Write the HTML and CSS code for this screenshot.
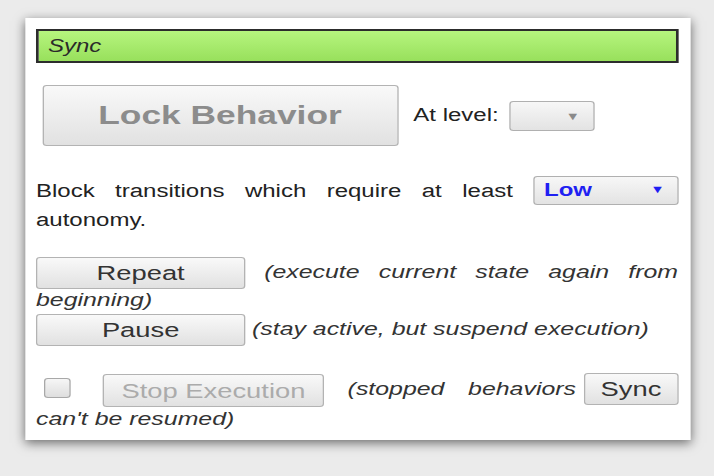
FILE: index.html
```html
<!DOCTYPE html>
<html lang="en">
<head>
<meta charset="UTF-8">
<meta name="viewport" content="width=device-width, initial-scale=1.0">
<title>Behavior Control</title>
<link rel="stylesheet" href="styles.css">
</head>
<body>
    <div class="page">
        <div class="panel">
            <div class="state-bar">Sync</div>

            <div class="lock-row">
                <button class="btn btn-lock" disabled>Lock Behavior</button>
                <span class="level-label">At level:</span>
                <span class="dropdown dropdown-level"><span class="arrow">&#9660;</span></span>
            </div>

            <p class="block-text">Block transitions which require at least <span class="dropdown dropdown-low"><span class="value">Low</span><span class="arrow">&#9660;</span></span> autonomy.</p>

            <p class="cmd cmd-repeat"><button class="btn btn-cmd">Repeat</button> <i class="note">(execute current state again from beginning)</i></p>
            <p class="cmd cmd-pause"><button class="btn btn-cmd">Pause</button> <i class="note">(stay active, but suspend execution)</i></p>

            <p class="cmd stop-row"><button class="btn btn-sync">Sync</button><span class="check"></span> <button class="btn btn-stop" disabled>Stop Execution</button> <i class="note">(stopped behaviors can't be resumed)</i></p>
        </div>
    </div>
</body>
</html>
```

FILE: styles.css
```css
html, body {
    margin: 0;
    padding: 0;
    background-color: #ebebeb;
}

body {
    font-family: "Liberation Sans", Arial, sans-serif;
    font-size: 18px;
    color: #222;
    height: 476px;
    overflow: hidden;
}

/* the whole view is drawn wide, so stretch it sideways */
.page {
    width: 535.5px;
    transform: scaleX(1.3333);
    transform-origin: 0 0;
    padding-top: 18px;
}

.panel {
    margin-left: 18.75px;
    width: 481.5px;
    padding: 11px 9px 9px 8.25px;
    background-color: #fff;
    box-shadow: 0 3px 9px rgba(0, 0, 0, 0.55);
}

.state-bar {
    height: 30px;
    line-height: 30px;
    padding-left: 7px;
    border: 2px solid #2c2c2c;
    background: linear-gradient(#b6f57e, #98e05c);
    font-style: italic;
    color: #2a2a2a;
}

.lock-row {
    display: flex;
    align-items: center;
    margin-top: 22px;
}

.btn {
    font-family: "Liberation Sans", Arial, sans-serif;
    font-size: 20.5px;
    color: #333;
    padding: 0;
    margin: 0;
    border: 1px solid #b3b3b3;
    border-radius: 3px;
    background: linear-gradient(#f9f9f9, #e1e1e1);
    box-sizing: border-box;
    vertical-align: middle;
}

.btn-lock {
    margin-left: 4.5px;
    width: 267px;
    height: 61px;
    font-size: 26.5px;
    font-weight: bold;
    color: #8c8c8c;
}

.level-label {
    margin-left: 11.5px;
}

.dropdown {
    display: inline-block;
    position: relative;
    box-sizing: border-box;
    border: 1px solid #b0b0b0;
    border-radius: 3px;
    background: linear-gradient(#f7f7f7, #e3e3e3);
    vertical-align: middle;
}

.dropdown .arrow {
    position: absolute;
    top: 0;
    font-size: 11px;
}

.dropdown-level {
    margin-left: 8px;
    width: 64px;
    height: 30px;
}

.dropdown-level .arrow {
    right: 10px;
    line-height: 28px;
    color: #8a8a8a;
}

.dropdown-low {
    top: -2px;
    width: 108.5px;
    height: 29px;
    line-height: 27px;
}

.dropdown-low .value {
    padding-left: 7px;
    font-weight: bold;
    color: #1f1ff2;
}

.dropdown-low .arrow {
    right: 9px;
    line-height: 24px;
    color: #1f1ff2;
}

.block-text {
    margin: 32px 0 0 0;
    line-height: 26px;
    text-align: justify;
}

.cmd {
    margin: 0;
    text-align: justify;
}

.cmd-repeat {
    margin-top: 24px;
}

.cmd-pause {
    margin-top: 3px;
}

.note {
    font-size: 18.67px;
    color: #333;
}

.btn-cmd {
    width: 157px;
    height: 32px;
}

.stop-row {
    margin-top: 28px;
    line-height: 23px;
}

.btn-sync {
    float: right;
    width: 70.5px;
    height: 32px;
    margin-left: 6px;
    margin-top: -1px;
}

.check {
    display: inline-block;
    box-sizing: border-box;
    width: 19.5px;
    height: 20px;
    margin: 0 3px 0 6px;
    border: 1px solid #a8a8a8;
    border-radius: 3px;
    background: linear-gradient(#f6f6f6, #dedede);
    vertical-align: middle;
    position: relative;
    top: -3px;
}

.btn-stop {
    width: 166px;
    height: 33px;
    margin-left: 4px;
    color: #ababab;
}
```
